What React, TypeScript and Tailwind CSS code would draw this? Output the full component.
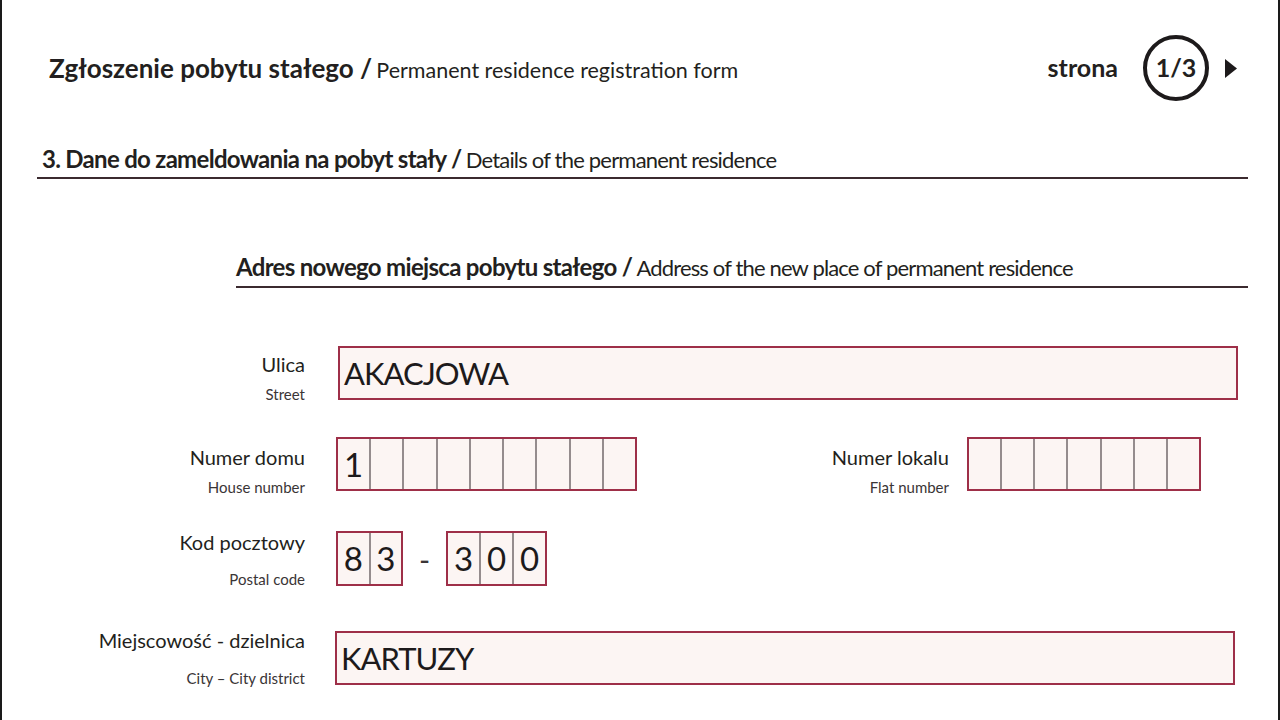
import type { ReactNode } from 'react'

const boxBorder = 'border-2 border-[#9e2f48] bg-[#fcf5f3]'
const digitText = 'text-[33px] leading-none text-[#1d1a1b]'
const valueText = 'text-[31px] leading-none tracking-[-1px] text-[#1d1a1b]'

function FieldLabel({ main, sub, gap }: { main: string; sub: string; gap: string }) {
  return (
    <div className="flex flex-col items-end text-right">
      <span className="text-[20px] leading-6 text-[#231f20]">{main}</span>
      <span className={`${gap} text-[15px] leading-5 text-[#3a3536]`}>{sub}</span>
    </div>
  )
}

function CellBox({ chars, count, width, height = 'h-[54px]' }: { chars: string; count: number; width: string; height?: string }) {
  return (
    <div className={`flex ${height} ${width} ${boxBorder}`}>
      {Array.from({ length: count }).map((_, i) => (
        <div
          key={i}
          className={`flex flex-1 items-center justify-center ${digitText} ${
            i > 0 ? 'border-l-2 border-[#958c8d]' : ''
          }`}
        >
          {chars[i] ?? ''}
        </div>
      ))}
    </div>
  )
}

function TextBox({ value, width }: { value: string; width: string }) {
  return (
    <div className={`flex h-[54px] ${width} items-center pl-[4px] ${boxBorder}`}>
      <span className={valueText}>{value}</span>
    </div>
  )
}

function Row({ label, children, className }: { label: ReactNode; children: ReactNode; className: string }) {
  return (
    <div className={`flex items-start ${className}`}>
      <div className="flex w-[303px] justify-end">{label}</div>
      {children}
    </div>
  )
}

export default function App() {
  return (
    <div className="h-[720px] w-[1280px] overflow-hidden border-x-2 border-[#1a1a1a] bg-white font-['Lato',sans-serif] text-[#231f20]">
      <header className="mt-[35px] flex h-[66px] items-center justify-between pl-[47px] pr-[41px]">
        <h1 className="whitespace-nowrap">
          <span className="text-[26px] font-bold">Zgłoszenie pobytu stałego /</span>{' '}
          <span className="text-[21.5px]">Permanent residence registration form</span>
        </h1>
        <div className="flex items-center">
          <span className="text-[25px] font-bold">strona</span>
          <div className="ml-[25px] flex h-[66px] w-[66px] items-center justify-center rounded-full border-[4px] border-[#1d1a1b] text-[25px] font-bold">
            1/3
          </div>
          <svg className="ml-[16px]" width="12" height="19" viewBox="0 0 12 19">
            <path d="M0 0 L12 9.5 L0 19 Z" fill="#1d1a1b" />
          </svg>
        </div>
      </header>

      <section className="ml-[35px] mr-[30px] mt-[44px] border-b-2 border-[#3b2a2f] pb-[4px] pl-[5px]">
        <h2 className="h-[28px] whitespace-nowrap leading-[28px]">
          <span className="text-[24px] font-bold tracking-[-0.7px]">3. Dane do zameldowania na pobyt stały /</span>{' '}
          <span className="text-[22px] tracking-[-0.8px]">Details of the permanent residence</span>
        </h2>
      </section>

      <section className="ml-[234px] mr-[30px] mt-[74px] border-b-2 border-[#3b2a2f] pb-[5px]">
        <h3 className="h-[28px] whitespace-nowrap leading-[28px]">
          <span className="text-[24px] font-bold tracking-[-0.68px]">Adres nowego miejsca pobytu stałego /</span>{' '}
          <span className="text-[22px] tracking-[-0.84px]">Address of the new place of permanent residence</span>
        </h3>
      </section>

      <Row
        className="mt-[58px] h-[54px]"
        label={
          <div className="pt-[6px]">
            <FieldLabel main="Ulica" sub="Street" gap="mt-[8px]" />
          </div>
        }
      >
        <div className="ml-[33px]">
          <TextBox value="AKACJOWA" width="w-[900px]" />
        </div>
      </Row>

      <Row
        className="mt-[37px] h-[54px]"
        label={
          <div className="pt-[8px]">
            <FieldLabel main="Numer domu" sub="House number" gap="mt-[8px]" />
          </div>
        }
      >
        <div className="ml-[31px]">
          <CellBox chars="1" count={9} width="w-[301px]" />
        </div>
        <div className="ml-auto mr-[77px] flex items-start">
          <div className="pt-[8px]">
            <FieldLabel main="Numer lokalu" sub="Flat number" gap="mt-[8px]" />
          </div>
          <div className="ml-[18px]">
            <CellBox chars="" count={7} width="w-[234px]" />
          </div>
        </div>
      </Row>

      <Row
        className="mt-[40px] h-[55px]"
        label={
          <div className="-mt-[1px]">
            <FieldLabel main="Kod pocztowy" sub="Postal code" gap="mt-[15px]" />
          </div>
        }
      >
        <div className="ml-[31px] flex items-center">
          <CellBox chars="83" count={2} width="w-[67px]" height="h-[55px]" />
          <span className="mx-[16px] text-[30px] leading-none text-[#3a3536]">-</span>
          <CellBox chars="300" count={3} width="w-[101px]" height="h-[55px]" />
        </div>
      </Row>

      <Row
        className="mt-[45px] h-[54px]"
        label={
          <div className="-mt-[3px]">
            <FieldLabel main="Miejscowość - dzielnica" sub="City – City district" gap="mt-[16px]" />
          </div>
        }
      >
        <div className="ml-[30px]">
          <TextBox value="KARTUZY" width="w-[900px]" />
        </div>
      </Row>
    </div>
  )
}
